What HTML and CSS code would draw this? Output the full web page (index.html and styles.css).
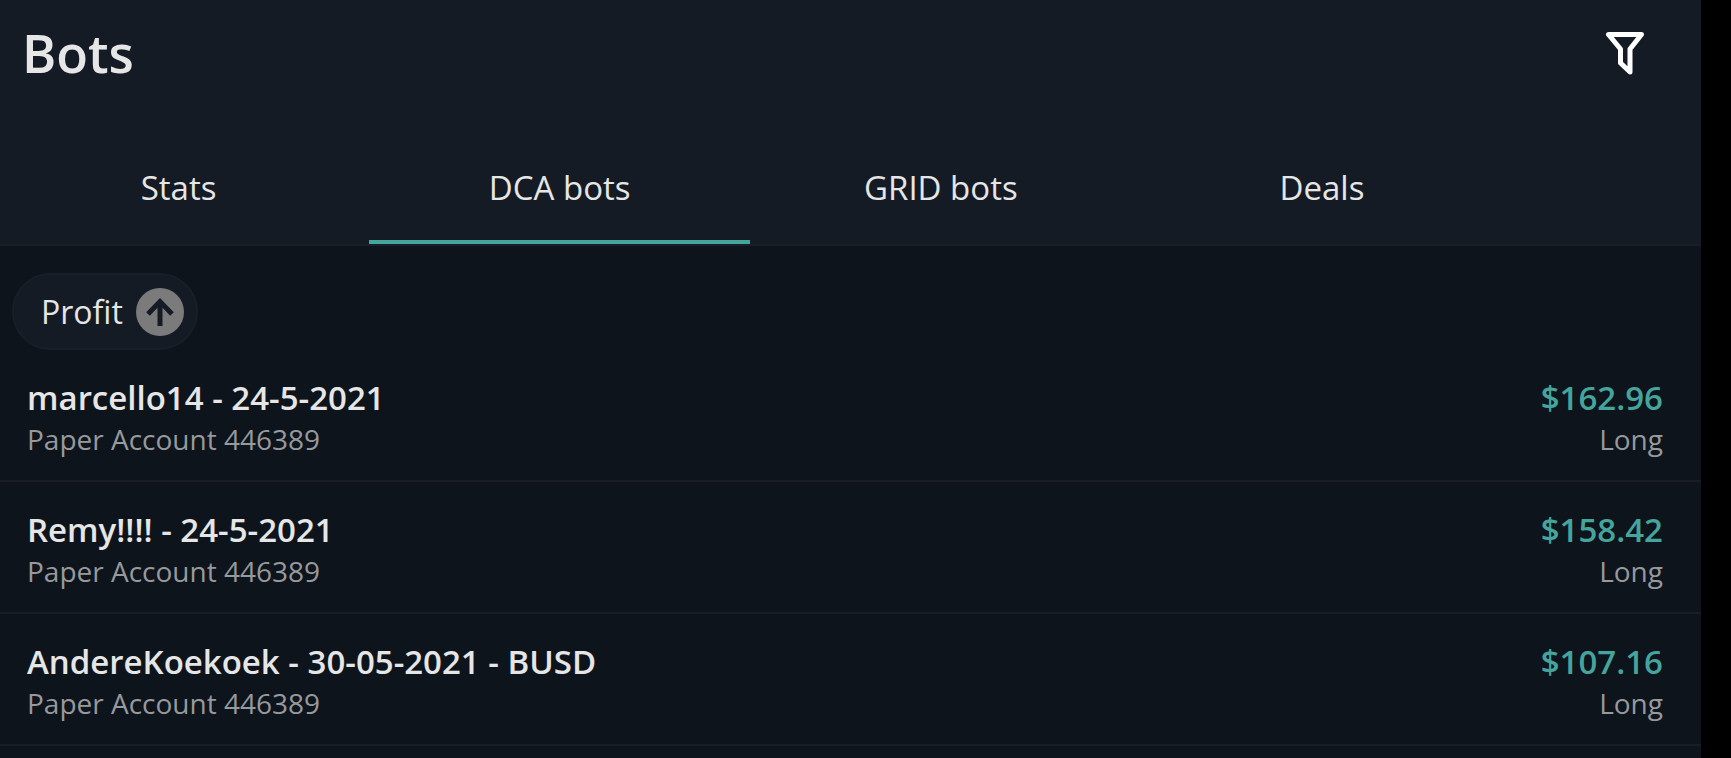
FILE: index.html
```html
<!DOCTYPE html>
<html lang="en">
<head>
    <meta charset="UTF-8">
    <meta name="viewport" content="width=device-width, initial-scale=1.0">
    <title>Bots</title>
    <link rel="stylesheet" href="styles.css">
</head>
<body>
    <div class="app">
        <!-- Title and tabs -->
        <header class="header">
            <div class="title-bar">
                <h1>Bots</h1>
                <button class="filter-button" aria-label="Filter">
                    <svg width="40" height="44" viewBox="0 0 40 44" fill="none" stroke="#ffffff" stroke-width="5" stroke-linejoin="round">
                        <path d="M3.500 3.500H36.500L25 18V41L15.500 32V18Z"/>
                    </svg>
                </button>
            </div>
            <nav class="tabs">
                <a href="#stats" class="tab">Stats</a>
                <a href="#dca" class="tab active">DCA bots</a>
                <a href="#grid" class="tab">GRID bots</a>
                <a href="#deals" class="tab">Deals</a>
            </nav>
        </header>

        <!-- Bot list -->
        <main>
            <div class="sort-bar">
                <button class="sort-button">
                    Profit
                    <svg width="48" height="48" viewBox="0 0 48 48" fill="none">
                        <circle cx="24" cy="24" r="24" fill="#7b7b7b"/>
                        <path d="M24 38V14M12 26L24 13.500L36 26" stroke="#141b25" stroke-width="5"/>
                    </svg>
                </button>
            </div>
            <ul class="bot-list">
                <li class="bot">
                    <div class="bot-info">
                        <div class="bot-name">marcello14 - 24-5-2021</div>
                        <div class="bot-detail">Paper Account 446389</div>
                    </div>
                    <div class="bot-result">
                        <div class="bot-profit">$162.96</div>
                        <div class="bot-detail">Long</div>
                    </div>
                </li>
                <li class="bot">
                    <div class="bot-info">
                        <div class="bot-name">Remy!!!! - 24-5-2021</div>
                        <div class="bot-detail">Paper Account 446389</div>
                    </div>
                    <div class="bot-result">
                        <div class="bot-profit">$158.42</div>
                        <div class="bot-detail">Long</div>
                    </div>
                </li>
                <li class="bot">
                    <div class="bot-info">
                        <div class="bot-name">AndereKoekoek - 30-05-2021 - BUSD</div>
                        <div class="bot-detail">Paper Account 446389</div>
                    </div>
                    <div class="bot-result">
                        <div class="bot-profit">$107.16</div>
                        <div class="bot-detail">Long</div>
                    </div>
                </li>
            </ul>
        </main>
    </div>
</body>
</html>
```
FILE: styles.css
```css
* {
    box-sizing: border-box;
}

body {
    margin: 0;
    padding-right: 30px;
    background: #000000;
    color: #e6e6e6;
    font-family: "Open Sans", "Noto Sans", sans-serif;
}

.app {
    min-height: 100vh;
    background: #0d141c;
    overflow: hidden;
}

button {
    font-family: inherit;
    color: inherit;
    cursor: pointer;
}

/* Header */
.header {
    background: #141b25;
    border-bottom: 2px solid #1a1e27;
}

.title-bar {
    display: flex;
    justify-content: space-between;
    align-items: center;
    height: 106px;
    padding: 0 56px 0 22px;
}

h1 {
    margin: 0;
    font-size: 52px;
    font-weight: 600;
    line-height: 72px;
}

.filter-button {
    display: flex;
    padding: 0;
    border: none;
    background: none;
}

/* The tab strip runs slightly past the left edge */
.tabs {
    display: grid;
    grid-template-columns: repeat(4, 22.25%);
    margin-left: -12px;
}

.tab {
    padding: 60px 0 30px;
    border-bottom: 4px solid transparent;
    color: inherit;
    font-size: 33px;
    line-height: 44px;
    text-align: center;
    text-decoration: none;
}

.tab.active {
    border-bottom-color: #45a59d;
}

/* Sort chip */
.sort-bar {
    padding: 27px 12px 0;
}

.sort-button {
    display: flex;
    align-items: center;
    gap: 13px;
    height: 77px;
    padding: 0 12px 0 27px;
    border: 2px solid #191e27;
    border-radius: 39px;
    background: #141b25;
    font-size: 32px;
}

/* Bots */
.bot-list {
    margin: 0;
    padding: 0;
    list-style: none;
}

.bot {
    display: flex;
    justify-content: space-between;
    height: 132px;
    padding: 26px 38px 0 27px;
    border-bottom: 2px solid #1a1e24;
}

.bot-name,
.bot-profit {
    font-size: 33px;
    font-weight: 600;
    line-height: 44px;
}

.bot-profit {
    color: #45a59d;
}

.bot-detail {
    color: #97999c;
    font-size: 28px;
    line-height: 38px;
}

.bot-result {
    text-align: right;
}
```
